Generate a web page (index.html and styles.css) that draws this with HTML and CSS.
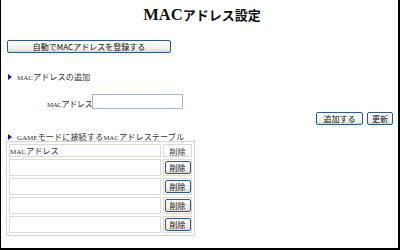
FILE: index.html
```html
<!DOCTYPE html>
<html lang="ja">
<head>
<meta charset="utf-8">
<title>MACアドレス設定</title>
<link rel="stylesheet" href="styles.css">
</head>
<body>
<div class="page">
  <h1 class="title"><span class="title-latin">MAC</span>アドレス設定</h1>
  <div class="auto-row">
    <button class="btn btn-wide" type="button">自動でMACアドレスを登録する</button>
  </div>
  <div class="section-head"><span class="tri"></span><span class="lat">MAC</span>アドレスの追加</div>
  <div class="add-row">
    <label class="add-label"><span class="lat">MAC</span>アドレス</label>
    <input class="mac-input" type="text">
  </div>
  <div class="action-row">
    <button class="btn btn-add" type="button">追加する</button>
    <button class="btn btn-upd" type="button">更新</button>
  </div>
  <div class="section-head section-head2"><span class="tri"></span><span class="lat">GAME</span>モードに接続する<span class="lat">MAC</span>アドレステーブル</div>
  <table class="mac-table">
    <tr class="head-row"><td class="col-mac"><span class="lat">MAC</span>アドレス</td><td class="col-del">削除</td></tr>
    <tr class="row"><td class="col-mac"></td><td class="col-del"><button class="btn btn-del" type="button">削除</button></td></tr>
    <tr class="row"><td class="col-mac"></td><td class="col-del"><button class="btn btn-del" type="button">削除</button></td></tr>
    <tr class="row"><td class="col-mac"></td><td class="col-del"><button class="btn btn-del" type="button">削除</button></td></tr>
    <tr class="row"><td class="col-mac"></td><td class="col-del"><button class="btn btn-del" type="button">削除</button></td></tr>
  </table>
</div>
</body>
</html>
```
FILE: styles.css
```css
html, body {
  margin: 0;
  padding: 0;
  background: #fff;
}
.page {
  box-sizing: border-box;
  width: 400px;
  height: 250px;
  border-left: 1px solid #000;
  border-right: 2px solid #000;
  border-bottom: 2px solid #000;
  padding: 7px 0 0 5px;
  font-family: "Noto Sans CJK JP", sans-serif;
  font-size: 8.2px;
  color: #222;
  overflow: hidden;
}
.title {
  margin: 0;
  height: 16px;
  line-height: 16px;
  text-align: center;
  font-size: 13px;
  font-weight: 600;
  color: #111;
  font-family: "Noto Sans CJK JP", sans-serif;
}
.title-latin {
  font-family: "Liberation Serif", serif;
  font-size: 16.5px;
  font-weight: bold;
  line-height: 1;
}
.lat {
  font-family: "Liberation Serif", serif;
  font-size: 7px;
  line-height: 1;
}
.auto-row {
  margin-top: 17px;
  height: 13px;
  display: flex;
  padding-left: 1px;
}
.btn {
  box-sizing: border-box;
  height: 13px;
  margin: 0;
  padding: 0;
  border: 1px solid #2c5a8c;
  border-radius: 2px;
  background: linear-gradient(#ffffff, #f1f0ea 70%, #dcd8c8);
  font-family: "Noto Sans CJK JP", sans-serif;
  font-size: 8px;
  line-height: 11px;
  color: #111;
  display: flex;
  align-items: center;
  justify-content: center;
  white-space: nowrap;
}
.btn-wide { width: 164px; }
.section-head {
  margin-top: 18px;
  height: 10px;
  line-height: 10px;
  padding-left: 2px;
  color: #333;
  white-space: nowrap;
}
.tri {
  display: inline-block;
  vertical-align: middle;
  width: 0;
  height: 0;
  border-top: 3.5px solid transparent;
  border-bottom: 3.5px solid transparent;
  border-left: 4px solid #1010c8;
  margin: -2px 5px 0 0;
}
.add-row {
  margin-top: 13px;
  display: flex;
  align-items: center;
  padding-left: 41px;
  height: 15px;
}
.add-label {
  line-height: 10px;
  padding-top: 4px;
  color: #333;
  white-space: nowrap;
  letter-spacing: -0.5px;
}
.mac-input {
  box-sizing: border-box;
  width: 91px;
  height: 15px;
  margin: 0;
  border: 1px solid #a5b9cf;
  background: #fff;
  padding: 0 2px;
}
.action-row {
  margin-top: 3px;
  display: flex;
  justify-content: flex-end;
  gap: 4px;
  padding-right: 5px;
  height: 13px;
}
.btn-add { width: 47px; }
.btn-upd { width: 26px; }
.section-head2 {
  margin-top: 6px;
}
.mac-table {
  margin-top: 0;
  margin-left: 0;
  width: 189px;
  border-collapse: separate;
  border-spacing: 2px;
  border: 1px solid #d6d4cc;
  font-size: 8.2px;
  color: #333;
}
.mac-table td {
  border: 1px solid #dcdad2;
  padding: 0;
  line-height: 10px;
}
.col-mac {
  width: 150px;
  padding-left: 1px;
}
.head-row td {
  height: 10px;
}
.head-row .col-del {
  text-align: center;
}
.row td {
  height: 15px;
}
.row .col-del {
  vertical-align: middle;
}
.btn-del {
  width: 26px;
  margin: 0 auto;
}
```
